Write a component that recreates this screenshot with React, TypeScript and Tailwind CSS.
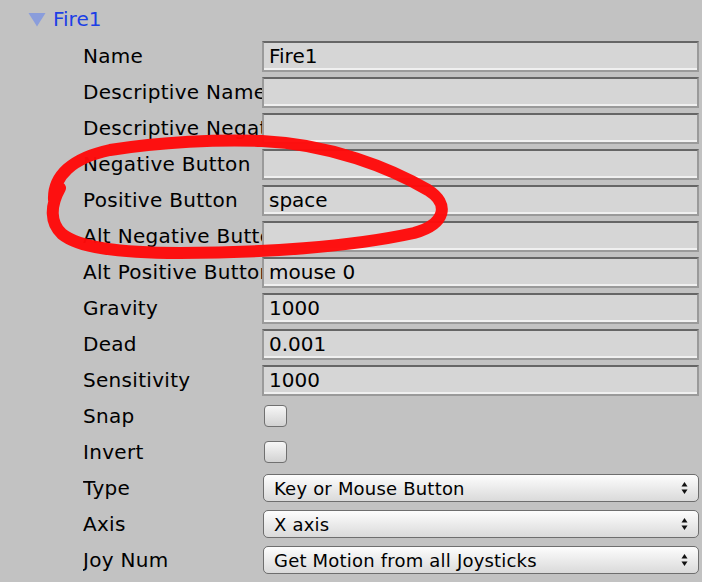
const FONT = "font-['DejaVu_Sans',_'Verdana',_sans-serif]"

type Row =
  | { label: string; kind: 'text'; value: string }
  | { label: string; kind: 'check' }
  | { label: string; kind: 'select'; value: string }

const rows: Row[] = [
  { label: 'Name', kind: 'text', value: 'Fire1' },
  { label: 'Descriptive Name', kind: 'text', value: '' },
  { label: 'Descriptive Negative Name', kind: 'text', value: '' },
  { label: 'Negative Button', kind: 'text', value: '' },
  { label: 'Positive Button', kind: 'text', value: 'space' },
  { label: 'Alt Negative Button', kind: 'text', value: '' },
  { label: 'Alt Positive Button', kind: 'text', value: 'mouse 0' },
  { label: 'Gravity', kind: 'text', value: '1000' },
  { label: 'Dead', kind: 'text', value: '0.001' },
  { label: 'Sensitivity', kind: 'text', value: '1000' },
  { label: 'Snap', kind: 'check' },
  { label: 'Invert', kind: 'check' },
  { label: 'Type', kind: 'select', value: 'Key or Mouse Button' },
  { label: 'Axis', kind: 'select', value: 'X axis' },
  { label: 'Joy Num', kind: 'select', value: 'Get Motion from all Joysticks' },
]

function TextField({ value }: { value: string }) {
  return (
    <div className="flex h-[31px] flex-1 items-center border-2 border-[#9a9a9a] border-t-[#666666] bg-[#d6d6d6] pl-[5px] text-[20px] leading-normal text-black shadow-[inset_0_-2px_0_#f0f0f0]">
      {value}
    </div>
  )
}

function CheckBox() {
  return (
    <div className="ml-[2px] h-[22px] w-[23px] rounded-[4px] border-[1.5px] border-[#707070] bg-gradient-to-b from-[#f7f7f7] to-[#d2d2d2]" />
  )
}

function SelectField({ value }: { value: string }) {
  return (
    <div className="ml-[1px] flex h-[28px] flex-1 items-center justify-between rounded-[5px] border-[1.5px] border-[#6e6e6e] bg-gradient-to-b from-[#fdfdfd] to-[#dadada] pl-[10px] pr-[10px] text-[18px] leading-normal tracking-[0.2px] text-black">
      <span>{value}</span>
      <svg width="7" height="14" viewBox="0 0 7 14">
        <path d="M3.5 1 L6.5 5.5 L0.5 5.5 Z" fill="#111" />
        <path d="M3.5 13 L6.5 8.5 L0.5 8.5 Z" fill="#111" />
      </svg>
    </div>
  )
}

export default function App() {
  return (
    <div className={`relative h-[582px] w-[702px] overflow-hidden bg-[#c2c2c2] ${FONT}`}>
      <div className="flex h-[38px] items-center pl-[28px]">
        <svg width="18" height="15" viewBox="0 0 18 15" className="mr-[7px]">
          <path d="M0.5 1 L17.5 1 L9 14.5 Z" fill="#8a9ddb" />
        </svg>
        <span className="text-[20px] leading-normal text-[#1c3fe6]">Fire1</span>
      </div>

      <div className="flex flex-col pl-[83px] pr-[3px]">
        {rows.map((row) => (
          <div key={row.label} className="flex h-[36px] items-center">
            <div className="w-[179px] shrink-0 overflow-hidden whitespace-nowrap text-[20px] leading-normal tracking-[0.3px] text-black">
              {row.label}
            </div>
            {row.kind === 'text' ? <TextField value={row.value} /> : null}
            {row.kind === 'check' ? <CheckBox /> : null}
            {row.kind === 'select' ? <SelectField value={row.value} /> : null}
          </div>
        ))}
      </div>

      {/* hand-drawn annotation */}
      <svg
        className="pointer-events-none absolute left-0 top-0"
        width="702"
        height="582"
        viewBox="0 0 702 582"
      >
        <path
          d="M 54 200 C 53 176, 72 158, 110 150 C 160 142, 220 139, 262 141 C 330 144, 390 168, 428 190 C 450 204, 446 224, 414 233 C 350 247, 262 253, 180 253 C 115 253, 78 247, 62 234 C 50 223, 50 206, 60 188"
          fill="none"
          stroke="#ff0a0a"
          strokeWidth="12"
          strokeLinecap="round"
          strokeLinejoin="round"
          opacity="0.97"
        />
      </svg>
    </div>
  )
}
